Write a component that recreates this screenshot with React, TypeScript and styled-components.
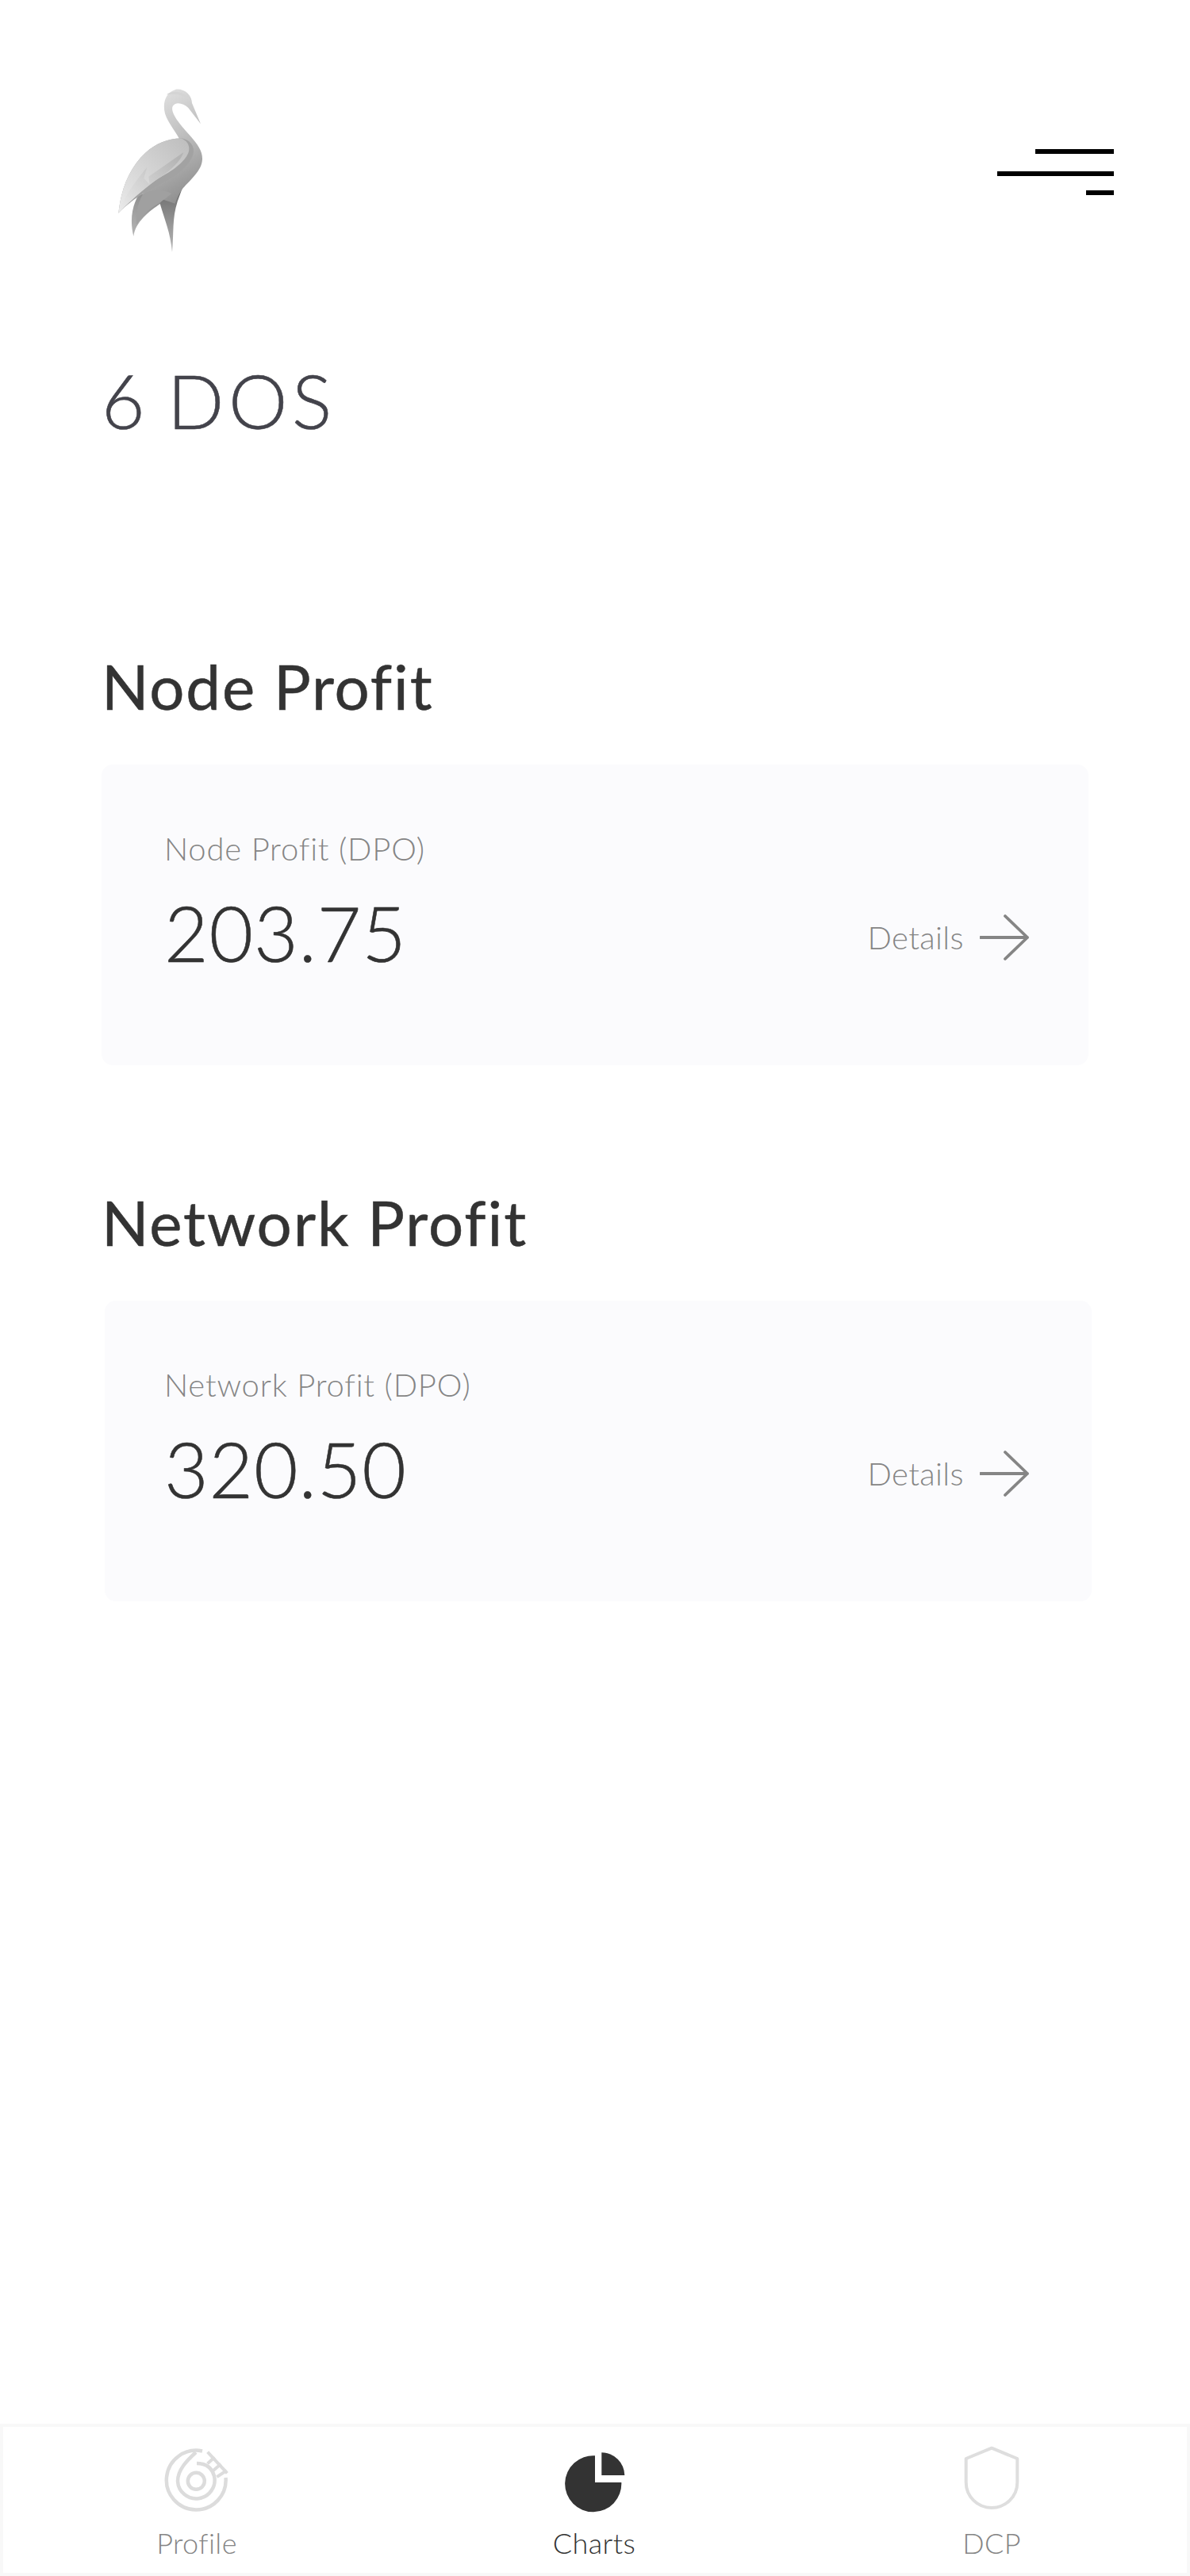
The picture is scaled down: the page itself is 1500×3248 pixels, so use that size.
import React from "react";
import styled, { createGlobalStyle } from "styled-components";

const Global = createGlobalStyle`
  html, body { margin: 0; padding: 0; background: #fff; }
  body {
    font-family: "Lato", "Noto Sans", sans-serif;
    font-variant-ligatures: none;
  }
`;

const Page = styled.div`
  width: 1500px;
  height: 3248px;
  display: flex;
  flex-direction: column;
  background: #fff;
  overflow: hidden;
`;

const Header = styled.header`
  display: flex;
  justify-content: space-between;
  align-items: flex-start;
  padding: 80px 96px 0 100px;
`;

const MenuButton = styled.div`
  display: flex;
  flex-direction: column;
  align-items: flex-end;
  margin-top: 108px;
`;

const MenuBar = styled.span<{ $w: number; $gap: number }>`
  display: block;
  width: ${(p) => p.$w}px;
  height: 6px;
  margin-bottom: ${(p) => p.$gap}px;
  background: #000;
`;

const PageTitle = styled.h1`
  margin: 105px 0 0 128px;
  font-size: 94px;
  line-height: 120px;
  font-weight: 300;
  color: #43434b;
  letter-spacing: 5.5px;
  word-spacing: -8px;
  -webkit-text-stroke: 0.6px #43434b;
`;

const Section = styled.section<{ $top: number }>`
  margin-top: ${(p) => p.$top}px;
  display: flex;
  flex-direction: column;
  padding-left: 128px;
`;

const SectionTitle = styled.h2`
  margin: 0 0 51px 0;
  font-size: 78px;
  line-height: 96px;
  font-weight: 400;
  color: #333;
  letter-spacing: 1.9px;
  -webkit-text-stroke: 0.5px #333;
`;

const Card = styled.div<{ $shift: number }>`
  width: 1244px;
  height: 379px;
  margin-left: ${(p) => p.$shift}px;
  box-sizing: border-box;
  background: #fbfbfd;
  border-radius: 14px;
  padding: 82px ${(p) => 75 + p.$shift}px 0 ${(p) => 79 - p.$shift}px;
  display: flex;
  justify-content: space-between;
  align-items: flex-start;
`;

const Values = styled.div`
  display: flex;
  flex-direction: column;
`;

const ValueLabel = styled.div`
  font-size: 40px;
  line-height: 48px;
  font-weight: 300;
  color: #858585;
  letter-spacing: 0.8px;
`;

const Amount = styled.div`
  margin-top: 24px;
  font-size: 96px;
  line-height: 116px;
  font-weight: 300;
  color: #333;
  letter-spacing: 0.8px;
  -webkit-text-stroke: 0.6px #333;
`;

const DetailsLink = styled.div`
  display: flex;
  align-items: center;
  gap: 20px;
  margin-top: 106px;
  font-size: 40px;
  line-height: 48px;
  font-weight: 300;
  color: #858585;
  letter-spacing: 0.4px;
`;

const Nav = styled.nav`
  margin-top: auto;
  height: 192px;
  box-sizing: border-box;
  border: 4px solid #f8f8f8;
  display: flex;
  justify-content: space-between;
  padding: 0 96px 0 94px;
`;

const NavItem = styled.div<{ $active?: boolean }>`
  width: 300px;
  display: flex;
  flex-direction: column;
  align-items: center;
  color: ${(p) => (p.$active ? "#333" : "#858585")};
  font-size: 36px;
  line-height: 42px;
  font-weight: 300;
  letter-spacing: 0.4px;
`;

const NavIcon = styled.svg`
  display: block;
  margin-top: 20px;
  width: 100px;
  height: 100px;
`;

const NavLabel = styled.span`
  margin-top: 5px;
`;

const Crane = () => (
  <svg width="220" height="260" viewBox="0 0 660 780" aria-hidden="true">
    <defs>
      <linearGradient id="neck" x1="0.3" y1="0" x2="0.6" y2="1">
        <stop offset="0" stopColor="#e2e2e2" />
        <stop offset="0.45" stopColor="#c0c0c0" />
        <stop offset="1" stopColor="#8e8e8e" />
      </linearGradient>
      <linearGradient id="wing" x1="0" y1="1" x2="1" y2="0">
        <stop offset="0" stopColor="#ebebeb" />
        <stop offset="1" stopColor="#bdbdbd" />
      </linearGradient>
      <linearGradient id="feather" x1="0" y1="1" x2="1" y2="0.2">
        <stop offset="0" stopColor="#ececec" />
        <stop offset="1" stopColor="#b4b4b4" />
      </linearGradient>
      <linearGradient id="tail" x1="0.6" y1="0" x2="0.2" y2="1">
        <stop offset="0" stopColor="#7a7a7a" />
        <stop offset="1" stopColor="#b2b2b2" />
      </linearGradient>
      <linearGradient id="leg" x1="0.5" y1="0" x2="0.5" y2="1">
        <stop offset="0" stopColor="#6a6a6a" />
        <stop offset="1" stopColor="#b8b8b8" />
      </linearGradient>
    </defs>
    <path d="M222 500 C196 548 192 600 205 654 C212 600 262 560 310 528 L380 440 Z" fill="url(#tail)" />
    <path d="M305 530 C322 590 345 640 351 714 C358 640 350 585 372 520 L390 470 L330 480 Z" fill="url(#leg)" />
    <path
      d="M426 150 L459 229 L412 168 C392 148 362 144 353 162 C342 188 386 236 416 270 C448 306 466 332 465 362 C464 404 420 440 392 472 C378 490 372 505 362 530 L240 490 L380 290 C370 265 335 225 324 190 C314 150 325 110 365 98 C400 95 425 120 426 150 Z"
      fill="url(#neck)"
    />
    <path d="M240 495 C280 470 320 480 350 492 L300 530 C270 545 240 570 216 610 C214 560 220 530 240 495 Z" fill="#a0a0a0" />
    <path d="M330 118 C350 100 405 102 425 148 C400 120 365 112 330 118 Z" fill="#d4d4d4" />
    <path
      d="M148 566 C158 470 192 392 250 338 C290 302 340 282 392 284 C420 292 436 312 431 338 C424 376 382 416 322 448 C270 476 198 512 148 566 Z"
      fill="#a2a2a2"
    />
    <path
      d="M148 566 C158 470 192 392 250 338 C290 302 340 282 388 284 C410 294 418 312 414 332 C406 364 360 402 310 428 C270 452 198 512 148 566 Z"
      fill="url(#wing)"
    />
    <path
      d="M148 566 C172 500 205 455 256 392 L244 434 L266 458 L262 428 L394 336 C384 370 340 408 310 428 C270 452 198 512 148 566 Z"
      fill="url(#feather)"
    />
  </svg>
);

const ArrowIcon = () => (
  <svg width="62" height="60" viewBox="2 0 62 60" aria-hidden="true">
    <path
      d="M3 30 H62 M34 3 L62 30 L34 57"
      fill="none"
      stroke="#858585"
      strokeWidth="3.8"
      strokeLinecap="round"
      strokeLinejoin="round"
    />
  </svg>
);

const ProfileGlyph = () => (
  <NavIcon viewBox="0 0 100 100" aria-hidden="true">
    <g fill="none" stroke="#dcdcdc" strokeWidth="4.5">
      <circle cx="49.3" cy="48.3" r="10.5" />
      <path d="M57 10.5 A37.4 37.4 0 1 0 86.5 44" />
      <path d="M49 12 C38 22 26 34 26 48.3 A23.3 23.3 0 1 0 72 42 C69 31 62 26 50 26" />
    </g>
    <g fill="none" stroke="#dcdcdc" strokeWidth="4" strokeLinecap="square" strokeLinejoin="miter">
      <path d="M65 13 L87 37" />
      <path d="M71 19.5 L65 25 M79 28 L72 34 M86 36 L77 42" />
    </g>
  </NavIcon>
);

const PieGlyph = () => (
  <NavIcon viewBox="0 0 100 100" aria-hidden="true">
    <path d="M51 16.2 V50 H84.3 A35.6 35.6 0 1 1 51 16.2 Z" fill="#333" />
    <path d="M59.3 12.3 A29 29 0 0 1 88.3 41 H59.3 Z" fill="#333" />
  </NavIcon>
);

const ShieldGlyph = () => (
  <NavIcon viewBox="0 0 100 100" aria-hidden="true">
    <path
      d="M50 6.7 L82.3 20 V50 A32.3 32 0 0 1 17.7 50 V20 Z"
      fill="none"
      stroke="#dedede"
      strokeWidth="4"
      strokeLinejoin="round"
    />
  </NavIcon>
);

const ProfitSection = ({
  title,
  label,
  value,
  shift,
  top,
}: {
  title: string;
  label: string;
  value: string;
  shift: number;
  top: number;
}) => (
  <Section $top={top}>
    <SectionTitle>{title}</SectionTitle>
    <Card $shift={shift}>
      <Values>
        <ValueLabel>{label}</ValueLabel>
        <Amount>{value}</Amount>
      </Values>
      <DetailsLink>
        Details
        <ArrowIcon />
      </DetailsLink>
    </Card>
  </Section>
);

export default function App() {
  return (
    <Page>
      <Global />
      <Header>
        <Crane />
        <MenuButton>
          <MenuBar $w={99} $gap={22} />
          <MenuBar $w={147} $gap={18} />
          <MenuBar $w={35} $gap={0} />
        </MenuButton>
      </Header>
      <PageTitle>6 DOS</PageTitle>
      <ProfitSection top={252} shift={0} title="Node Profit" label="Node Profit (DPO)" value="203.75" />
      <ProfitSection top={150} shift={4} title="Network Profit" label="Network Profit (DPO)" value="320.50" />
      <Nav>
        <NavItem>
          <ProfileGlyph />
          <NavLabel>Profile</NavLabel>
        </NavItem>
        <NavItem $active>
          <PieGlyph />
          <NavLabel>Charts</NavLabel>
        </NavItem>
        <NavItem>
          <ShieldGlyph />
          <NavLabel>DCP</NavLabel>
        </NavItem>
      </Nav>
    </Page>
  );
}
